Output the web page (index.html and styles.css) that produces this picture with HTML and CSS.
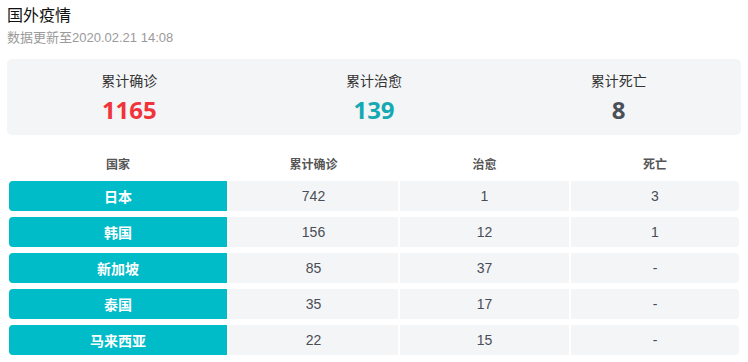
FILE: index.html
```html
<!DOCTYPE html>
<html lang="zh">
<head>
<meta charset="utf-8">
<link rel="stylesheet" href="styles.css">
</head>
<body>
<div class="page">
  <header class="head">
    <h1 class="title">国外疫情</h1>
    <p class="sub">数据更新至2020.02.21 14:08</p>
  </header>
  <section class="summary">
    <div class="stat">
      <div class="label">累计确诊</div>
      <div class="num red">1165</div>
    </div>
    <div class="stat">
      <div class="label">累计治愈</div>
      <div class="num teal">139</div>
    </div>
    <div class="stat">
      <div class="label">累计死亡</div>
      <div class="num dark">8</div>
    </div>
  </section>
  <section class="table">
    <div class="row thead">
      <div class="th">国家</div>
      <div class="th">累计确诊</div>
      <div class="th">治愈</div>
      <div class="th">死亡</div>
    </div>
    <div class="row body">
      <div class="country">日本</div><div class="cell">742</div><div class="cell">1</div><div class="cell last">3</div>
    </div>
    <div class="row body">
      <div class="country">韩国</div><div class="cell">156</div><div class="cell">12</div><div class="cell last">1</div>
    </div>
    <div class="row body">
      <div class="country">新加坡</div><div class="cell">85</div><div class="cell">37</div><div class="cell last">-</div>
    </div>
    <div class="row body">
      <div class="country">泰国</div><div class="cell">35</div><div class="cell">17</div><div class="cell last">-</div>
    </div>
    <div class="row body">
      <div class="country">马来西亚</div><div class="cell">22</div><div class="cell">15</div><div class="cell last">-</div>
    </div>
  </section>
</div>
</body>
</html>
```
FILE: styles.css
```css
* { box-sizing: border-box; }
html, body { margin: 0; padding: 0; background: #fff; }
body {
  font-family: "Liberation Sans", "Noto Sans CJK SC", sans-serif;
  color: #333;
}
.page { padding: 5px 0 0; }
.head { padding: 0 7px; }
.title {
  margin: 0;
  font-size: 16px;
  font-weight: normal;
  line-height: 22px;
  color: #111;
}
.sub {
  margin: 2px 0 0;
  font-size: 13px;
  line-height: 17px;
  color: #9a9a9a;
}
.summary {
  margin: 13px 7px 0;
  background: #f4f5f7;
  border-radius: 5px;
  display: grid;
  grid-template-columns: 1fr 1fr 1fr;
  padding: 12px 0 10px;
}
.stat { text-align: center; }
.label {
  font-size: 14px;
  line-height: 20px;
  color: #333;
}
.num {
  margin-top: 4px;
  font-family: "Open Sans", "Liberation Sans", sans-serif;
  font-size: 24px;
  font-weight: bold;
  line-height: 30px;
}
.red { color: #f0343a; }
.teal { color: #14a9b3; }
.dark { color: #4b4f58; }
.table {
  margin: 20px 9px 0;
  display: flex;
  flex-direction: column;
  gap: 6px;
}
.row {
  display: grid;
  grid-template-columns: 218fr 169fr 169fr 168fr;
  column-gap: 2px;
}
.thead { margin-bottom: -1px; }
.th {
  text-align: center;
  font-size: 12px;
  font-weight: bold;
  line-height: 21px;
  color: #555;
}
.body { height: 30px; }
.country {
  background: #00bcc9;
  color: #fff;
  font-weight: bold;
  font-size: 14px;
  border-radius: 4px 0 0 4px;
  display: flex;
  align-items: center;
  justify-content: center;
}
.cell {
  background: #f4f5f7;
  color: #4a4d55;
  font-size: 14px;
  display: flex;
  align-items: center;
  justify-content: center;
}
.cell.last { border-radius: 0 4px 4px 0; }
```
